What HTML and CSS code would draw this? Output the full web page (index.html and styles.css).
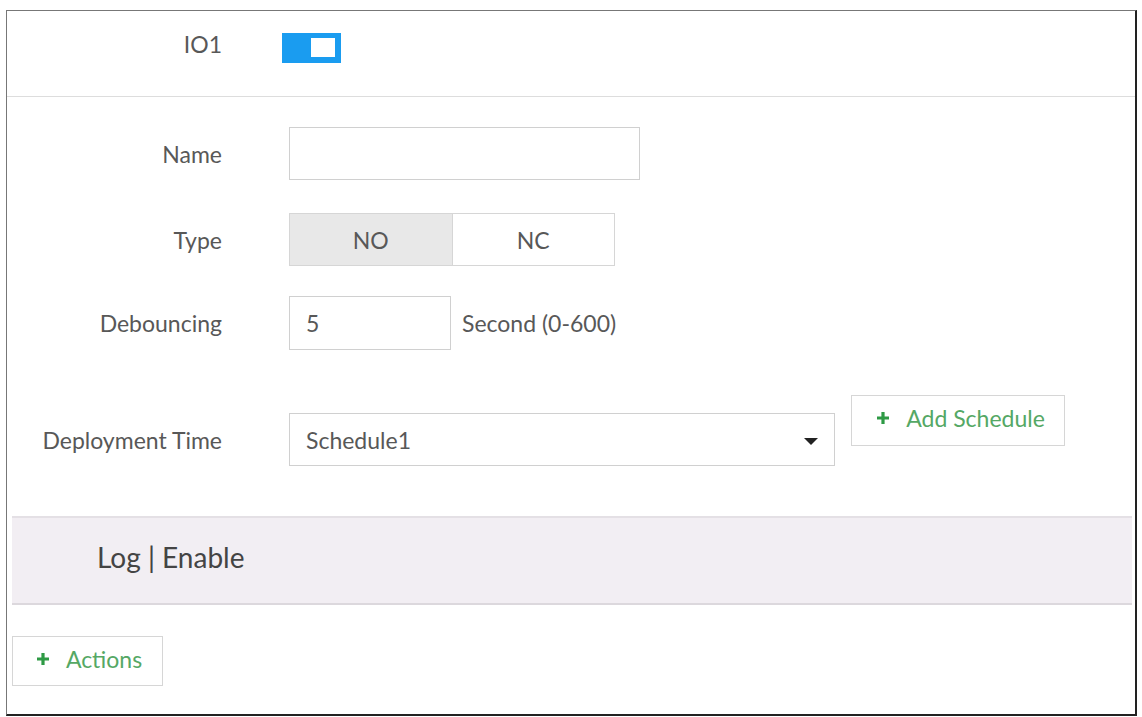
FILE: index.html
```html
<!DOCTYPE html>
<html lang="en">
<head>
    <meta charset="UTF-8">
    <meta name="viewport" content="width=device-width, initial-scale=1.0">
    <link rel="stylesheet" href="styles.css">
    <title>Alarm IO</title>
</head>
<body>
    <div class="frame">
        <div class="header">
            <div class="label io-label">IO1</div>
            <div class="toggle"><span class="knob"></span></div>
        </div>

        <div class="form">
            <div class="row row-name">
                <div class="label">Name</div>
                <div class="input name-input"></div>
            </div>
            <div class="row row-type">
                <div class="label">Type</div>
                <div class="segment">
                    <div class="seg active">NO</div>
                    <div class="seg">NC</div>
                </div>
            </div>
            <div class="row row-debounce">
                <div class="label">Debouncing</div>
                <div class="input short-input">5</div>
                <div class="unit">Second (0-600)</div>
            </div>
            <div class="row row-deploy">
                <div class="label">Deployment Time</div>
                <div class="input select">
                    <span>Schedule1</span>
                    <span class="caret"></span>
                </div>
                <button class="btn add-schedule">
                    <svg class="plus" width="12" height="12" viewBox="0 0 12 12"><path d="M6 0v12M0 6h12" stroke="#2e9a45" stroke-width="3.2"/></svg>
                    Add Schedule
                </button>
            </div>
        </div>

        <div class="log-band">Log | Enable</div>

        <button class="btn actions">
            <svg class="plus" width="12" height="12" viewBox="0 0 12 12"><path d="M6 0v12M0 6h12" stroke="#2e9a45" stroke-width="3.2"/></svg>
            Actions
        </button>
    </div>
</body>
</html>
```

FILE: styles.css
```css
body {
    margin: 0;
    padding: 0;
    background-color: #fff;
    font-family: 'Lato', 'Open Sans', sans-serif;
    color: #585858;
}

.frame {
    box-sizing: border-box;
    width: 1131px;
    height: 706px;
    margin: 10px 0 0 6px;
    border: 1px solid #777;
    border-right: 2px solid #222;
    border-bottom: 2px solid #222;
    background-color: #fff;
}

.label {
    width: 215px;
    text-align: right;
    font-size: 23px;
    color: #585858;
    flex-shrink: 0;
}

.header {
    box-sizing: border-box;
    height: 86px;
    border-bottom: 1px solid #ddd;
    display: flex;
    align-items: center;
    gap: 60px;
    padding-bottom: 12px;
}

.io-label {
    margin-bottom: 8px;
}

.toggle {
    width: 59px;
    height: 30px;
    background-color: #1a9cf0;
    display: flex;
    align-items: center;
    justify-content: flex-end;
    padding-right: 6px;
    box-sizing: border-box;
}

.knob {
    width: 24px;
    height: 19px;
    background-color: #fff;
}

.form {
    padding-top: 30px;
    display: flex;
    flex-direction: column;
}

.row {
    display: flex;
    align-items: center;
}

.row .label {
    margin-right: 67px;
}

.row-type {
    margin-top: 33px;
}

.row-debounce {
    margin-top: 30px;
}

.input {
    box-sizing: border-box;
    height: 53px;
    border: 1px solid #d0d0d0;
    background-color: #fff;
    font-size: 23px;
    color: #585858;
    display: flex;
    align-items: center;
    padding-left: 16px;
}

.name-input {
    width: 351px;
}

.short-input {
    width: 162px;
    height: 54px;
}

.unit {
    margin-left: 11px;
    font-size: 23px;
    color: #585858;
}

.segment {
    display: flex;
    width: 326px;
    height: 53px;
    box-sizing: border-box;
    border: 1px solid #d6d6d6;
}

.seg {
    flex: 1;
    display: flex;
    align-items: center;
    justify-content: center;
    font-size: 23px;
    color: #585858;
}

.seg.active {
    background-color: #e8e8e8;
    border-right: 1px solid #d6d6d6;
}

.row-deploy {
    margin-top: 63px;
    align-items: flex-start;
}

.row-deploy .label {
    align-self: center;
}

.select {
    width: 546px;
    justify-content: space-between;
    padding-right: 16px;
}

.caret {
    width: 0;
    height: 0;
    border-left: 7px solid transparent;
    border-right: 7px solid transparent;
    border-top: 7px solid #222;
    margin-top: 3px;
}

.btn {
    box-sizing: border-box;
    background-color: #fff;
    border: 1px solid #d6d6d6;
    font-family: 'Lato', 'Open Sans', sans-serif;
    font-size: 23px;
    color: #55a865;
    display: flex;
    align-items: center;
    justify-content: center;
    padding: 0;
    cursor: pointer;
}

.plus {
    margin-right: 17px;
    flex-shrink: 0;
}

.add-schedule {
    width: 214px;
    height: 51px;
    margin-left: 16px;
    margin-top: -18px;
    padding: 0 0 6px 6px;
}

.log-band {
    box-sizing: border-box;
    margin: 50px 3px 0 5px;
    height: 89px;
    background-color: #f2eef3;
    border-top: 2px solid #e4e0e5;
    border-bottom: 2px solid #dcd8dd;
    display: flex;
    align-items: center;
    padding: 0 0 8px 85px;
    font-size: 28px;
    color: #444;
}

.actions {
    margin: 31px 0 0 5px;
    width: 151px;
    height: 50px;
    padding: 0 0 4px 4px;
}
```
